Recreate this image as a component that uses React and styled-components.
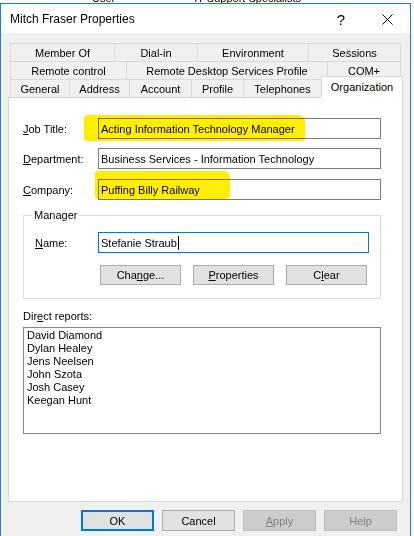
import styled, { createGlobalStyle } from "styled-components";

const Global = createGlobalStyle`
  html, body { margin: 0; padding: 0; background: #ffffff; }
  body { font-family: "Liberation Sans", Arial, sans-serif; font-size: 11px; color: #000; }
  u { text-decoration-thickness: 1px; text-underline-offset: 1px; }
`;

const Page = styled.div`
  width: 414px;
  height: 536px;
  overflow: hidden;
  background: #ffffff;
`;

const Behind = styled.div`
  height: 3px;
  overflow: hidden;
  display: flex;
  span {
    display: block;
    margin-top: -8px;
    line-height: 13px;
    font-size: 11px;
  }
  span:first-child { margin-left: 92px; }
  span:last-child { margin-left: 79px; }
`;

const Window = styled.div`
  width: 411px;
  height: 533px;
  box-sizing: border-box;
  border: 1px solid #1a7dd7;
  border-bottom: none;
  display: flex;
  flex-direction: column;
  background: #f0f0f0;
`;

const TitleBar = styled.div`
  height: 29px;
  background: #ffffff;
  display: flex;
  align-items: center;
  padding-left: 9px;
`;

const Title = styled.div`
  flex: 1;
  font-size: 12px;
  padding-top: 1px;
`;

const Caption = styled.div`
  width: 46px;
  height: 29px;
  display: flex;
  align-items: center;
  justify-content: center;
  font-size: 15px;
  padding-top: 1px;
`;

const Body = styled.div`
  padding: 10px 7px 0 7px;
  display: flex;
  flex-direction: column;
`;

const TabRow = styled.div`
  display: flex;
  height: 18px;
  margin-left: 2px;
`;

const Tab = styled.div`
  width: ${(p) => p.w}px;
  height: 18px;
  box-sizing: border-box;
  border: 1px solid #d9d9d9;
  border-bottom: none;
  background: #f0f0f0;
  display: flex;
  align-items: center;
  justify-content: center;
  white-space: nowrap;
  & + & { margin-left: -1px; }
`;

const ActiveTab = styled(Tab)`
  height: 22px;
  margin-top: -3px;
  background: #ffffff;
  position: relative;
  z-index: 1;
  padding-bottom: 2px;
`;

const Panel = styled.div`
  height: 405px;
  box-sizing: border-box;
  border: 1px solid #d9d9d9;
  background: #ffffff;
  padding: 20px 0 0 14px;
  display: flex;
  flex-direction: column;
`;

const FieldRow = styled.div`
  position: relative;
  display: flex;
  align-items: center;
  width: 358px;
  margin-top: ${(p) => p.mt || 0}px;
`;

const Label = styled.div`
  width: ${(p) => p.w || 75}px;
  flex-shrink: 0;
`;

const TextBox = styled.div`
  width: ${(p) => p.w || 283}px;
  height: 21px;
  box-sizing: border-box;
  border: 1px solid ${(p) => (p.focus ? "#0078d7" : "#7a7a7a")};
  background: #ffffff;
  padding-left: 2px;
  display: flex;
  align-items: center;
  white-space: nowrap;
`;

const Caret = styled.span`
  display: inline-block;
  width: 1px;
  height: 14px;
  background: #000;
  margin-left: 1px;
`;

const Highlight = styled.span`
  position: absolute;
  left: ${(p) => p.x}px;
  top: ${(p) => p.y}px;
  width: ${(p) => p.w}px;
  height: ${(p) => p.h}px;
  background: #ffee00;
  mix-blend-mode: multiply;
  border-radius: 3px 6px 4px 3px;
  pointer-events: none;
`;

const Group = styled.div`
  width: 358px;
  box-sizing: border-box;
  margin-top: 15px;
  border: 1px solid #dcdcdc;
  padding: 0 0 13px 11px;
  display: flex;
  flex-direction: column;
`;

const Legend = styled.div`
  align-self: flex-start;
  margin: -7px 0 0 -3px;
  padding: 0 2px;
  line-height: 13px;
  background: #ffffff;
`;

const ButtonRow = styled.div`
  display: flex;
  gap: 12px;
  margin: 12px 0 0 65px;
`;

const Button = styled.div`
  width: ${(p) => p.w || 81}px;
  height: ${(p) => p.h || 20}px;
  box-sizing: border-box;
  border: ${(p) => (p.primary ? "2px solid #0078d7" : p.disabled ? "1px solid #bfbfbf" : "1px solid #adadad")};
  background: ${(p) => (p.disabled ? "#cccccc" : "#e1e1e1")};
  color: ${(p) => (p.disabled ? "#838383" : "#000")};
  display: flex;
  align-items: center;
  justify-content: center;
`;

const ReportsLabel = styled.div`
  margin-top: 11px;
  line-height: 13px;
`;

const ListBox = styled.div`
  width: 358px;
  height: 107px;
  box-sizing: border-box;
  margin-top: 4px;
  border: 1px solid #828790;
  padding: 1px 0 0 3px;
  div { line-height: 13px; }
`;

const Footer = styled.div`
  display: flex;
  justify-content: flex-end;
  gap: 8px;
  padding: 8px 6px 0 0;
`;

function CloseIcon() {
  return (
    <svg width="11" height="11" viewBox="0 0 11 11">
      <path d="M0.5 0.5 L10.5 10.5 M10.5 0.5 L0.5 10.5" stroke="#000" strokeWidth="1" />
    </svg>
  );
}

const reports = ["David Diamond", "Dylan Healey", "Jens Neelsen", "John Szota", "Josh Casey", "Keegan Hunt"];

export default function App() {
  return (
    <Page>
      <Global />
      <Behind>
        <span>User</span>
        <span>IT Support Specialists</span>
      </Behind>
      <Window>
        <TitleBar>
          <Title>Mitch Fraser Properties</Title>
          <Caption>?</Caption>
          <Caption>
            <CloseIcon />
          </Caption>
        </TitleBar>
        <Body>
          <TabRow>
            <Tab w={105}>Member Of</Tab>
            <Tab w={84}>Dial-in</Tab>
            <Tab w={112}>Environment</Tab>
            <Tab w={93}>Sessions</Tab>
          </TabRow>
          <TabRow>
            <Tab w={117}>Remote control</Tab>
            <Tab w={202}>Remote Desktop Services Profile</Tab>
            <Tab w={74}>COM+</Tab>
          </TabRow>
          <TabRow>
            <Tab w={60}>General</Tab>
            <Tab w={61}>Address</Tab>
            <Tab w={63}>Account</Tab>
            <Tab w={53}>Profile</Tab>
            <Tab w={79}>Telephones</Tab>
            <ActiveTab w={82}>Organization</ActiveTab>
          </TabRow>
          <Panel>
            <FieldRow>
              <Label><u>J</u>ob Title:</Label>
              <TextBox>Acting Information Technology Manager</TextBox>
              <Highlight x={61} y={-3} w={221} h={26} />
            </FieldRow>
            <FieldRow mt={9}>
              <Label><u>D</u>epartment:</Label>
              <TextBox>Business Services - Information Technology</TextBox>
            </FieldRow>
            <FieldRow mt={10}>
              <Label><u>C</u>ompany:</Label>
              <TextBox>Puffing Billy Railway</TextBox>
              <Highlight x={72} y={-8} w={135} h={28} />
            </FieldRow>
            <Group>
              <Legend>Manager</Legend>
              <FieldRow mt={10}>
                <Label w={63}><u>N</u>ame:</Label>
                <TextBox w={271} focus>
                  Stefanie Straub<Caret />
                </TextBox>
              </FieldRow>
              <ButtonRow>
                <Button>Cha<u>n</u>ge...</Button>
                <Button><u>P</u>roperties</Button>
                <Button>C<u>l</u>ear</Button>
              </ButtonRow>
            </Group>
            <ReportsLabel>Dir<u>e</u>ct reports:</ReportsLabel>
            <ListBox>
              {reports.map((r) => (
                <div key={r}>{r}</div>
              ))}
            </ListBox>
          </Panel>
          <Footer>
            <Button w={73} h={21} primary>OK</Button>
            <Button w={73} h={21}>Cancel</Button>
            <Button w={73} h={21} disabled><u>A</u>pply</Button>
            <Button w={73} h={21} disabled>Help</Button>
          </Footer>
        </Body>
      </Window>
    </Page>
  );
}
